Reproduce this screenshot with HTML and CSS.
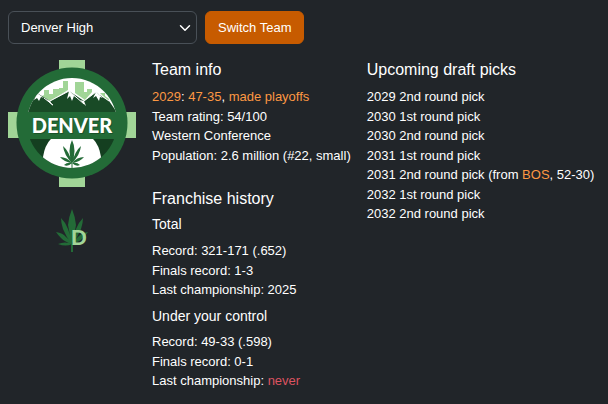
FILE: index.html
```
<!DOCTYPE html>
<html lang="en">
<head>
<meta charset="utf-8">
<meta name="viewport" content="width=device-width, initial-scale=1">
<title>Switch Team</title>
<link rel="stylesheet" href="styles.css">
</head>
<body>
<main>
  <form class="picker">
    <select class="team-select" aria-label="Team">
      <option>Denver High</option>
    </select>
    <button class="switch-button" type="button">Switch Team</button>
  </form>
  <div class="overview">
    <div class="logos">
      <svg class="logo" viewBox="0 0 128 128" role="img" aria-label="Denver High logo">
        <defs>
          <clipPath id="badge"><circle cx="64" cy="63" r="45"/></clipPath>
          <clipPath id="sky"><path d="M0 0H128V52H0Z"/></clipPath>
          <clipPath id="ground"><path d="M0 79H128V128H0Z"/></clipPath>
        </defs>
        <path fill="#a1d597" d="M51 0H77V52H128V78H77V127H51V78H0V52H51Z"/>
        <circle cx="64" cy="63" r="55.500" fill="#236b37"/>
        <g clip-path="url(#badge)">
          <g clip-path="url(#sky)">
            <path fill="#fff" d="M0 0H128V52H0Z"/>
            <path fill="#a1d597" d="M32 37L36 35V30H41V34H45V29H51V28H55V21H60V30L42 41L38 39ZM67 22H76V32H79V29H84V32L77 40L67 33ZM92 33H97V36L101 39L100 42L95 36Z"/>
            <path fill="#194a26" d="M14 54L29 33L42 41L61 31L76 41L88 32L101 41L110 54Z"/>
            <path fill="none" stroke="#fff" d="M36 38L45 45M42 41L61 31M61 31L76 44M76 41L88 32L101 41"/>
            <path fill="#fff" d="M29 33L26 40L29 38L31 41L33 37L36 38ZM61 31L59 39L62 36L64 41L66 36L69 38ZM88 32L85 38L88 36L91 41L92 37L95 38ZM38 39L42 41L45 46ZM72 40L76 41L78 46Z"/>
          </g>
          <g clip-path="url(#ground)">
            <path fill="#143f20" d="M0 79H128V128H0Z"/>
            <path fill="#fff" d="M44 78H84Q91 84 93 97V110H35V97Q37 84 44 78Z"/>
          </g>
        </g>
        <g fill="#236b37" transform="translate(64 102)">
          <path d="M0 1Q-5-12 0-22Q5-12 0 1ZM0 1Q-8-7-9-16Q-3-11 0 1ZM0 1Q8-7 9-16Q3-11 0 1ZM0 1Q-8 0-12-5Q-5-5 0 1ZM0 1Q8 0 12-5Q5-5 0 1ZM0 1Q-4 5-8 3Q-5 0 0 1ZM0 1Q4 5 8 3Q5 0 0 1ZM-0.500 0H0.500V6H-0.500Z"/>
        </g>
        <text class="wordmark-shade" x="65" y="74" text-anchor="middle">DENVER</text>
        <text class="wordmark" x="64" y="73" text-anchor="middle">DENVER</text>
      </svg>
      <svg class="mini-logo" viewBox="0 0 48 48" role="img" aria-label="Denver High small logo">
        <g fill="#236b37" transform="translate(24 34)">
          <path d="M0 2Q-2-6-4-17Q-3-26 0-33Q3-26 4-17Q2-6 0 2ZM0 2Q-6-5-9-13Q-11-19-11-24Q-6-19-4-13Q-1-5 0 2ZM0 2Q6-5 9-13Q11-19 11-24Q6-19 4-13Q1-5 0 2ZM0 2Q-7 0-11-4Q-14-7-16-10Q-9-9-6-5Q-2-2 0 2ZM0 2Q7 0 11-4Q14-7 16-10Q9-9 6-5Q2-2 0 2ZM0 2Q-6 5-14 2Q-7-1 0 2ZM-1 0H1V10H-1Z"/>
        </g>
        <text class="initial" x="23" y="37">D</text>
      </svg>
    </div>
    <div class="info">
      <section>
        <h2>Team info</h2>
        <p><a href="#season">2029</a>: <a href="#record">47-35</a>, <a href="#playoffs">made playoffs</a></p>
        <p>Team rating: 54/100</p>
        <p>Western Conference</p>
        <p>Population: 2.6 million (#22, small)</p>
      </section>
      <section class="history">
        <h2>Franchise history</h2>
        <h3>Total</h3>
        <p>Record: 321-171 (.652)</p>
        <p>Finals record: 1-3</p>
        <p>Last championship: 2025</p>
        <h3 class="next">Under your control</h3>
        <p>Record: 49-33 (.598)</p>
        <p>Finals record: 0-1</p>
        <p>Last championship: <span class="never">never</span></p>
      </section>
    </div>
    <section class="picks">
      <h2>Upcoming draft picks</h2>
      <ul>
        <li>2029 2nd round pick</li>
        <li>2030 1st round pick</li>
        <li>2030 2nd round pick</li>
        <li>2031 1st round pick</li>
        <li>2031 2nd round pick (from <a href="#bos">BOS</a>, 52-30)</li>
        <li>2032 1st round pick</li>
        <li>2032 2nd round pick</li>
      </ul>
    </section>
  </div>
</main>
</body>
</html>
```

FILE: styles.css
```
* { box-sizing: border-box; }

body {
  margin: 0;
  background: #212529;
  color: #fff;
  font: 13px/1.5 "Liberation Sans", Arial, sans-serif;
}

main { padding: 11px 8px 13px; }

h2, h3, p, ul { margin: 0; padding: 0; }
h2, h3 { font-weight: 400; line-height: 1.2; margin-bottom: 8px; }
h2 { font-size: 16px; }
h3 { font-size: 14px; }
ul { list-style: none; }
a { color: #fd9843; text-decoration: none; }
a:hover { text-decoration: underline; }

.picker { display: flex; gap: 8px; margin-bottom: 16px; }

.team-select, .switch-button {
  height: 33px;
  padding: 0 12px;
  border-radius: 6px;
  font: inherit;
  color: #fff;
}

.team-select {
  width: 189px;
  appearance: none;
  border: 1px solid #495057;
  background: #212529 url("data:image/svg+xml,%3Csvg xmlns='http://www.w3.org/2000/svg' viewBox='0 0 16 16'%3E%3Cpath fill='none' stroke='%23fff' stroke-linecap='round' stroke-linejoin='round' stroke-width='2' d='m2 5 6 6 6-6'/%3E%3C/svg%3E") no-repeat right 5px center / 12px 12px;
}

.switch-button { border: 1px solid #c75b00; background: #c75b00; cursor: pointer; }

.overview { display: flex; align-items: flex-start; gap: 16px; }

.logos {
  display: flex;
  flex: none;
  flex-direction: column;
  align-items: center;
  gap: 20px;
}
.logo { width: 128px; height: 128px; }
.mini-logo { width: 48px; height: 48px; }

.wordmark, .wordmark-shade {
  fill: #fff;
  font: 900 20px Lato, sans-serif;
}
.wordmark-shade { fill: #1b5229; }
.initial {
  fill: #a1d597;
  font: bold 22px "Liberation Sans", sans-serif;
}

.history { margin-top: 24px; }
.next { margin-top: 8px; }
.never { color: #dc5360; }
```
